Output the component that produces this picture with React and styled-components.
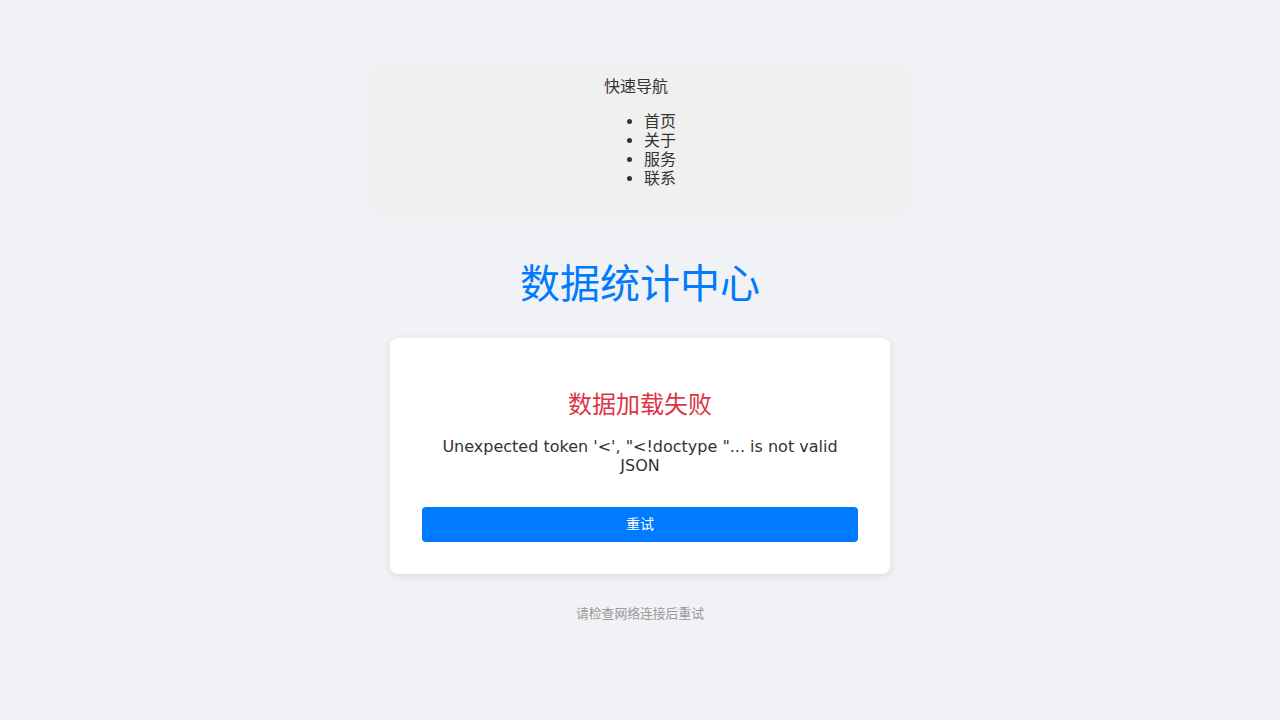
import React from "react";
import styled, { createGlobalStyle } from "styled-components";

const Global = createGlobalStyle`
  html, body {
    margin: 0;
    padding: 0;
    background: #f0f2f5;
    font-family: "DejaVu Sans", "Noto Sans CJK SC", sans-serif;
    color: #333;
  }
`;

const Page = styled.div`
  width: 540px;
  margin: 0 auto;
  padding: 66px 0 40px;
`;

const Nav = styled.nav`
  background: #f0f0f0;
  padding: 11px 10px 10px;
  text-align: center;
  font-size: 16px;
  line-height: 19px;
  color: #333;
`;

const NavInner = styled.div`
  display: inline-block;
  text-align: left;
`;

const NavTitle = styled.div`
  margin: 0;
`;

const NavList = styled.ul`
  margin: 16px 0;
  padding-left: 40px;
`;

const NavItem = styled.li`
  line-height: 19px;
`;

const Heading = styled.h1`
  margin: 47px 0 30px;
  font-size: 40px;
  line-height: 47px;
  font-weight: normal;
  color: #007bff;
  text-align: center;
`;

const Card = styled.section`
  width: 500px;
  box-sizing: border-box;
  margin: 0 auto;
  background: #fff;
  border-radius: 8px;
  box-shadow: 0 2px 8px rgba(0, 0, 0, 0.1);
  padding: 32px;
  text-align: center;
`;

const ErrorTitle = styled.h2`
  margin: 21px 0 18px;
  font-size: 24px;
  line-height: 28px;
  font-weight: normal;
  color: #dc3545;
`;

const Message = styled.p`
  margin: 0 0 32px;
  font-size: 16px;
  line-height: 19px;
  color: #333;
`;

const Button = styled.button`
  display: block;
  width: 100%;
  height: 35px;
  border: none;
  border-radius: 4px;
  background: #007bff;
  color: #fff;
  font-family: inherit;
  font-size: 14px;
  line-height: 17px;
  cursor: pointer;
`;

const Footer = styled.footer`
  margin-top: 32px;
  text-align: center;
  font-size: 12.8px;
  line-height: 15px;
  color: #999;
`;

export default function App() {
  const links = ["首页", "关于", "服务", "联系"];
  return (
    <>
      <Global />
      <Page>
        <Nav>
          <NavInner>
            <NavTitle>快速导航</NavTitle>
            <NavList>
              {links.map((l) => (
                <NavItem key={l}>{l}</NavItem>
              ))}
            </NavList>
          </NavInner>
        </Nav>
        <Heading>数据统计中心</Heading>
        <Card>
          <ErrorTitle>数据加载失败</ErrorTitle>
          <Message>
            Unexpected token '&lt;', "&lt;!doctype "... is not valid JSON
          </Message>
          <Button>重试</Button>
        </Card>
        <Footer>请检查网络连接后重试</Footer>
      </Page>
    </>
  );
}
